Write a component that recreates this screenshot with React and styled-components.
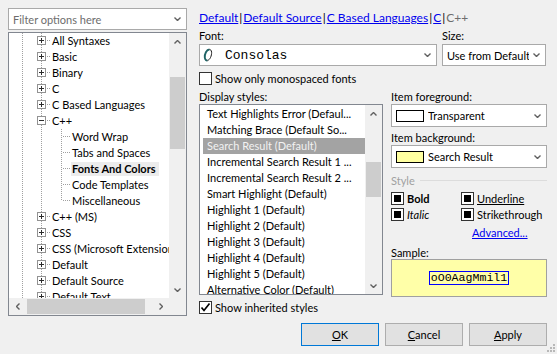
import React from 'react';
import styled, { createGlobalStyle, css } from 'styled-components';

const GlobalStyle = createGlobalStyle`
  html, body {
    margin: 0;
    padding: 0;
    background: #f0f0f0;
  }
  body {
    font-family: Lato, "Liberation Sans", sans-serif;
    font-size: 11px;
    color: #000;
  }
  * {
    box-sizing: border-box;
  }
`;

const Window = styled.div`
  position: relative;
  width: 557px;
  height: 354px;
  padding: 8px 10px 0 8px;
  display: grid;
  grid-template-columns: 179px 348px;
  grid-template-rows: 308px auto;
  column-gap: 12px;
  background: #f0f0f0;
  overflow: hidden;
`;

const LeftCol = styled.div`
  display: flex;
  flex-direction: column;
  gap: 2px;
  min-height: 0;
`;

const Combo = styled.div`
  display: flex;
  align-items: center;
  gap: 4px;
  height: ${(p) => p.$h || 22}px;
  padding: 0 5px 0 ${(p) => (p.$pl === undefined ? 4 : p.$pl)}px;
  background: #fff;
  border: 1px solid #a9a9a9;
  flex-shrink: 0;
`;

const ComboText = styled.span`
  flex: 1;
  overflow: hidden;
  white-space: nowrap;
  color: ${(p) => p.$color || '#000'};
  ${(p) =>
    p.$mono &&
    css`
      font-family: "Liberation Mono", monospace;
      font-size: 13px;
      margin-left: 8px;
    `}
`;

const Swatch = styled.span`
  width: 28px;
  height: 12px;
  flex-shrink: 0;
  border: 1px solid #000;
  background: ${(p) => p.$color};
`;

const TreeBox = styled.div`
  flex: 1;
  min-height: 0;
  border: 1px solid #828790;
  background: #fff;
  display: grid;
  grid-template-columns: 1fr 17px;
  grid-template-rows: 1fr 17px;
  overflow: hidden;
`;

const TreeViewport = styled.div`
  overflow: hidden;
  min-height: 0;
`;

const TreeRow = styled.div`
  height: 16px;
  display: flex;
  align-items: center;
  white-space: nowrap;
`;

const TreeLabel = styled.span`
  padding: 0 1px;
  line-height: 14px;
  ${(p) =>
    p.$selected &&
    css`
      font-weight: 700;
      background: #ececec;
      padding: 0 3px 0 1px;
    `}
`;

const ScrollV = styled.div`
  background: #f0f0f0;
  display: flex;
  flex-direction: column;
  min-height: 0;
`;

const ScrollH = styled.div`
  background: #f0f0f0;
  display: flex;
`;

const Corner = styled.div`
  background: #f0f0f0;
`;

const ScrollArrow = styled.div`
  flex: 0 0 17px;
  width: 17px;
  height: 17px;
  display: flex;
  align-items: center;
  justify-content: center;
`;

const Track = styled.div`
  flex: 1;
  display: flex;
  flex-direction: ${(p) => (p.$horizontal ? 'row' : 'column')};
`;

const Thumb = styled.div`
  background: #cdcdcd;
  ${(p) =>
    p.$horizontal
      ? css`
          margin: 1px 0 1px ${p.$offset}px;
          width: ${p.$size}px;
        `
      : css`
          margin: ${p.$offset}px 1px 0;
          height: ${p.$size}px;
        `}
`;

const RightCol = styled.div`
  display: flex;
  flex-direction: column;
`;

const Breadcrumb = styled.div`
  height: 18px;
  display: flex;
  align-items: center;
  font-size: 12px;
  white-space: nowrap;
`;

const Crumb = styled.span`
  color: #0000ee;
  text-decoration: underline;
`;

const CrumbSep = styled.span`
  margin: 0 1px;
`;

const CrumbCurrent = styled.span`
  color: #6d6d6d;
`;

const TopGrid = styled.div`
  display: grid;
  grid-template-columns: 238px 104px;
  column-gap: 5px;
`;

const FieldLabel = styled.div`
  height: 15px;
  line-height: 15px;
  margin-top: ${(p) => p.$mt || 0}px;
  margin-bottom: ${(p) => p.$mb || 0}px;
  white-space: nowrap;
`;

const CheckRow = styled.label`
  display: flex;
  align-items: center;
  gap: 3px;
  height: 13px;
  margin-top: ${(p) => p.$mt || 0}px;
  white-space: nowrap;
`;

const CheckBox = styled.span`
  width: 13px;
  height: 13px;
  flex-shrink: 0;
  border: 1px solid #333;
  background: #fff;
  display: flex;
  align-items: center;
  justify-content: center;
`;

const Mark = styled.span`
  width: 7px;
  height: 7px;
  background: #000;
`;

const StyleText = styled.span`
  ${(p) => p.$bold && 'font-weight: 700;'}
  ${(p) => p.$italic && 'font-style: italic;'}
  ${(p) => p.$underline && 'text-decoration: underline;'}
`;

const Lower = styled.div`
  display: grid;
  grid-template-columns: 184px 156px;
  column-gap: 8px;
`;

const Column = styled.div`
  display: flex;
  flex-direction: column;
`;

const ListBox = styled.div`
  height: 191px;
  border: 1px solid #828790;
  background: #fff;
  display: grid;
  grid-template-columns: 1fr 17px;
  overflow: hidden;
`;

const ListItems = styled.div`
  padding: 1px 0 0 3px;
  overflow: hidden;
`;

const ListItem = styled.div`
  height: 16px;
  line-height: 16px;
  padding-left: 4px;
  white-space: nowrap;
  overflow: hidden;
  ${(p) =>
    p.$selected &&
    css`
      background: #a3a3a3;
      color: #f2f2f2;
    `}
`;

const GroupHeader = styled.div`
  display: flex;
  align-items: center;
  gap: 5px;
  height: 14px;
  margin-top: 5px;
  color: #a0a0a0;

  &::after {
    content: '';
    flex: 1;
    height: 1px;
    background: #dcdcdc;
  }
`;

const StyleGrid = styled.div`
  display: grid;
  grid-template-columns: 70px 1fr;
  row-gap: 3px;
  margin-top: 5px;
`;

const Link = styled.span`
  color: #0000ee;
  text-decoration: underline;
  margin: 5px 0 0 81px;
  line-height: 14px;
`;

const SampleBox = styled.div`
  height: 38px;
  background: #ffffa8;
  border: 1px solid #a0a0a0;
  display: flex;
  align-items: center;
  justify-content: center;
`;

const SampleText = styled.span`
  font-family: "Liberation Mono", monospace;
  font-size: 11.6px;
  line-height: 12px;
  padding: 0 1px;
  border: 1px solid #0000ff;
`;

const ButtonRow = styled.div`
  grid-column: 1 / -1;
  display: flex;
  justify-content: flex-end;
  gap: 6px;
  margin-top: 7px;
`;

const Button = styled.button`
  width: 78px;
  height: 23px;
  padding: 0;
  font-family: inherit;
  font-size: 11px;
  color: #000;
  background: #e1e1e1;
  border: 1px solid ${(p) => (p.$default ? '#0078d7' : '#adadad')};
`;

const Grip = styled.svg`
  position: absolute;
  right: 2px;
  bottom: 2px;
`;

const Chevron = ({ dir = 'down' }) => {
  const pts = {
    down: '0.5,0.5 3.5,3.5 6.5,0.5',
    up: '0.5,3.5 3.5,0.5 6.5,3.5',
  };
  if (dir === 'left' || dir === 'right') {
    const p = dir === 'left' ? '3.5,0.5 0.5,3.5 3.5,6.5' : '0.5,0.5 3.5,3.5 0.5,6.5';
    return (
      <svg width="4" height="7" viewBox="0 0 4 7">
        <polyline points={p} fill="none" stroke="#606060" strokeWidth="1.4" />
      </svg>
    );
  }
  return (
    <svg width="7" height="4" viewBox="0 0 7 4">
      <polyline points={pts[dir]} fill="none" stroke="#606060" strokeWidth="1.4" />
    </svg>
  );
};

const Dots = (props) => (
  <line {...props} stroke="#a0a0a0" strokeDasharray="1 1" shapeRendering="crispEdges" />
);

const Connector = ({ level, box, last }) => {
  if (level === 2) {
    return (
      <svg width="62" height="16" style={{ flexShrink: 0 }}>
        <Dots x1="13.5" y1="0" x2="13.5" y2="16" />
        <Dots x1="32.5" y1="0" x2="32.5" y2="16" />
        <Dots x1="52.5" y1="0" x2="52.5" y2={last ? 8 : 16} />
        <Dots x1="54" y1="7.5" x2="62" y2="7.5" />
      </svg>
    );
  }
  return (
    <svg width="42" height="16" style={{ flexShrink: 0 }}>
      <Dots x1="13.5" y1="0" x2="13.5" y2="16" />
      <Dots x1="32.5" y1="0" x2="32.5" y2="4" />
      <Dots x1="32.5" y1="12" x2="32.5" y2="16" />
      <Dots x1="38" y1="7.5" x2="42" y2="7.5" />
      <rect x="28.5" y="3.5" width="8" height="8" fill="#fff" stroke="#929292" shapeRendering="crispEdges" />
      <line x1="30" y1="7.5" x2="35" y2="7.5" stroke="#2b2b2b" shapeRendering="crispEdges" />
      {box === 'plus' && (
        <line x1="32.5" y1="5" x2="32.5" y2="10" stroke="#2b2b2b" shapeRendering="crispEdges" />
      )}
    </svg>
  );
};

const FontIcon = () => (
  <svg width="10" height="14" viewBox="0 0 10 14">
    <path d="M6.5 1.5 C3.5 1.5 1.5 6 1.8 9.5 C2 12 3.5 12.6 4.5 12.4" fill="none" stroke="#1f6466" strokeWidth="1.9" />
    <path d="M4.5 12.4 C7 12 8.8 7.5 8.6 4.3 C8.4 2.2 7.5 1.5 6.5 1.5" fill="none" stroke="#1a1a1a" strokeWidth="1" />
  </svg>
);

const treeRows = [
  { label: 'All Syntaxes', box: 'plus' },
  { label: 'Basic', box: 'plus' },
  { label: 'Binary', box: 'plus' },
  { label: 'C', box: 'plus' },
  { label: 'C Based Languages', box: 'plus' },
  { label: 'C++', box: 'minus' },
  { label: 'Word Wrap', level: 2 },
  { label: 'Tabs and Spaces', level: 2 },
  { label: 'Fonts And Colors', level: 2, selected: true },
  { label: 'Code Templates', level: 2 },
  { label: 'Miscellaneous', level: 2, last: true },
  { label: 'C++ (MS)', box: 'plus' },
  { label: 'CSS', box: 'plus' },
  { label: 'CSS (Microsoft Extensions)', box: 'plus' },
  { label: 'Default', box: 'plus' },
  { label: 'Default Source', box: 'plus' },
  { label: 'Default Text', box: 'plus' },
];

const displayStyles = [
  'Text Highlights Error (Defaul...',
  'Matching Brace (Default So...',
  'Search Result (Default)',
  'Incremental Search Result 1 ...',
  'Incremental Search Result 2 ...',
  'Smart Highlight (Default)',
  'Highlight 1 (Default)',
  'Highlight 2 (Default)',
  'Highlight 3 (Default)',
  'Highlight 4 (Default)',
  'Highlight 5 (Default)',
  'Alternative Color (Default)',
];

const StyleCheck = ({ children, ...textProps }) => (
  <CheckRow>
    <CheckBox>
      <Mark />
    </CheckBox>
    <StyleText {...textProps}>{children}</StyleText>
  </CheckRow>
);

const App = () => {
  return (
    <>
      <GlobalStyle />
      <Window>
        <LeftCol>
          <Combo>
            <ComboText $color="#6d6d6d">Filter options here</ComboText>
            <Chevron />
          </Combo>
          <TreeBox>
            <TreeViewport>
              {treeRows.map((row) => (
                <TreeRow key={row.label}>
                  <Connector level={row.level || 1} box={row.box} last={row.last} />
                  <TreeLabel $selected={row.selected}>{row.label}</TreeLabel>
                </TreeRow>
              ))}
            </TreeViewport>
            <ScrollV>
              <ScrollArrow>
                <Chevron dir="up" />
              </ScrollArrow>
              <Track>
                <Thumb $offset={27} $size={72} />
              </Track>
              <ScrollArrow>
                <Chevron dir="down" />
              </ScrollArrow>
            </ScrollV>
            <ScrollH>
              <ScrollArrow>
                <Chevron dir="left" />
              </ScrollArrow>
              <Track $horizontal>
                <Thumb $horizontal $offset={1} $size={118} />
              </Track>
              <ScrollArrow>
                <Chevron dir="right" />
              </ScrollArrow>
            </ScrollH>
            <Corner />
          </TreeBox>
        </LeftCol>

        <RightCol>
          <Breadcrumb>
            <Crumb>Default</Crumb>
            <CrumbSep>|</CrumbSep>
            <Crumb>Default Source</Crumb>
            <CrumbSep>|</CrumbSep>
            <Crumb>C Based Languages</Crumb>
            <CrumbSep>|</CrumbSep>
            <Crumb>C</Crumb>
            <CrumbSep>|</CrumbSep>
            <CrumbCurrent>C++</CrumbCurrent>
          </Breadcrumb>

          <TopGrid>
            <FieldLabel $mt={2} $mb={1}>Font:</FieldLabel>
            <FieldLabel $mt={2} $mb={1}>Size:</FieldLabel>
            <Combo $pl={3}>
              <FontIcon />
              <ComboText $mono>Consolas</ComboText>
              <Chevron />
            </Combo>
            <Combo>
              <ComboText>Use from Default</ComboText>
              <Chevron />
            </Combo>
          </TopGrid>

          <CheckRow $mt={6}>
            <CheckBox />
            Show only monospaced fonts
          </CheckRow>

          <Lower>
            <Column>
              <FieldLabel $mt={4}>Display styles:</FieldLabel>
              <ListBox>
                <ListItems>
                  {displayStyles.map((s) => (
                    <ListItem key={s} $selected={s === 'Search Result (Default)'}>
                      {s}
                    </ListItem>
                  ))}
                </ListItems>
                <ScrollV>
                  <ScrollArrow>
                    <Chevron dir="up" />
                  </ScrollArrow>
                  <Track>
                    <Thumb $offset={40} $size={35} />
                  </Track>
                  <ScrollArrow>
                    <Chevron dir="down" />
                  </ScrollArrow>
                </ScrollV>
              </ListBox>
              <CheckRow $mt={6}>
                <CheckBox>
                  <svg width="11" height="11" viewBox="0 0 11 11">
                    <path d="M1.5 5.5 L4 8.5 L9.5 1.5" fill="none" stroke="#000" strokeWidth="1.7" />
                  </svg>
                </CheckBox>
                Show inherited styles
              </CheckRow>
            </Column>

            <Column>
              <FieldLabel $mt={4}>Item foreground:</FieldLabel>
              <Combo $h={23}>
                <Swatch $color="#fff" />
                <ComboText>Transparent</ComboText>
                <Chevron />
              </Combo>
              <FieldLabel $mt={3}>Item background:</FieldLabel>
              <Combo $h={23}>
                <Swatch $color="#ffffa0" />
                <ComboText>Search Result</ComboText>
                <Chevron />
              </Combo>
              <GroupHeader>Style</GroupHeader>
              <StyleGrid>
                <StyleCheck $bold>Bold</StyleCheck>
                <StyleCheck $underline>Underline</StyleCheck>
                <StyleCheck $italic>Italic</StyleCheck>
                <StyleCheck>Strikethrough</StyleCheck>
              </StyleGrid>
              <Link>Advanced...</Link>
              <FieldLabel $mt={6} style={{ height: 13, lineHeight: '13px' }}>
                Sample:
              </FieldLabel>
              <SampleBox>
                <SampleText>oO0AagMmil1</SampleText>
              </SampleBox>
            </Column>
          </Lower>
        </RightCol>

        <ButtonRow>
          <Button $default>
            <u>O</u>K
          </Button>
          <Button>
            <u>C</u>ancel
          </Button>
          <Button>
            <u>A</u>pply
          </Button>
        </ButtonRow>

        <Grip width="8" height="8" viewBox="0 0 8 8">
          {[
            [6, 0],
            [6, 3],
            [3, 3],
            [6, 6],
            [3, 6],
            [0, 6],
          ].map(([x, y]) => (
            <rect key={`${x}-${y}`} x={x} y={y} width="2" height="2" fill="#b8b8b8" />
          ))}
        </Grip>
      </Window>
    </>
  );
};

export default App;
